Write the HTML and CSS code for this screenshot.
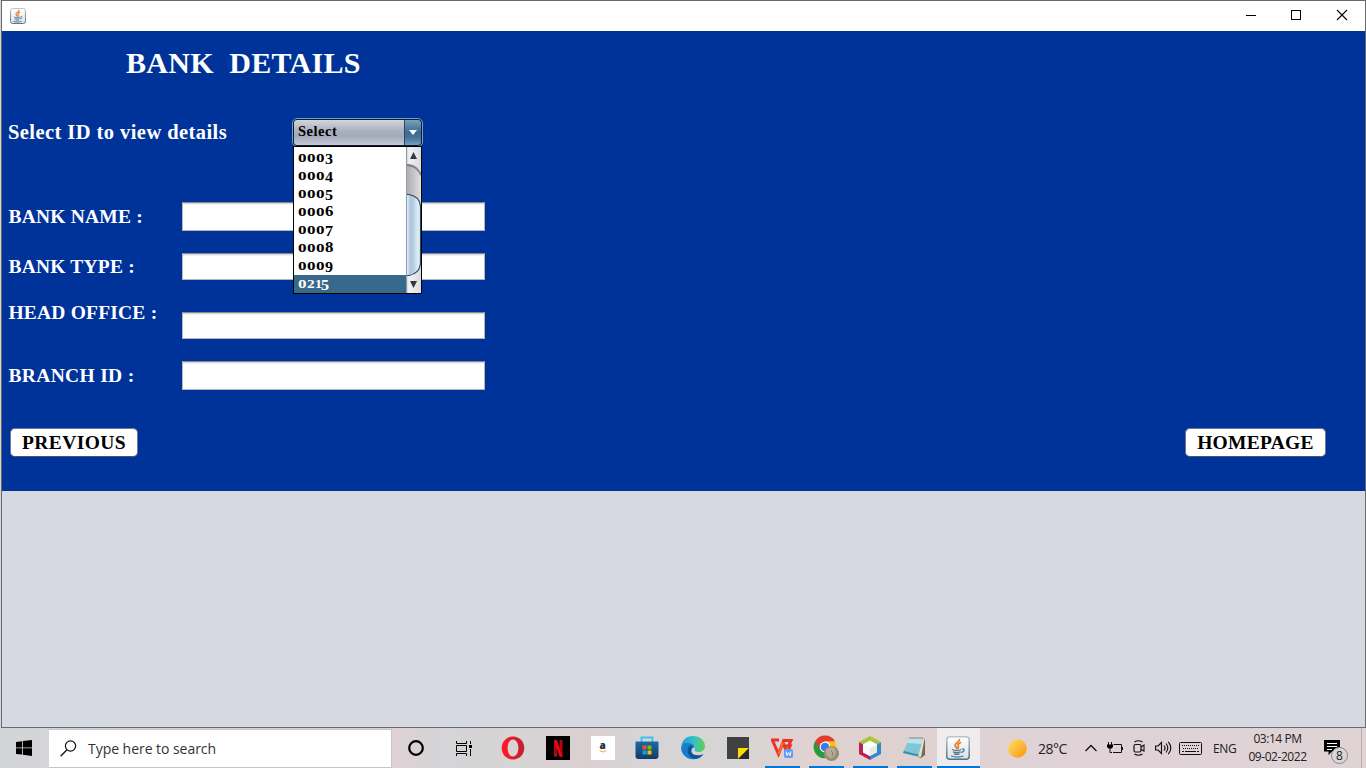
FILE: index.html
```html
<!DOCTYPE html>
<html lang="en">
<head>
<meta charset="utf-8">
<title>Bank Details</title>
<link rel="stylesheet" href="styles.css">
</head>
<body>
<svg class="defs" width="0" height="0">
  <defs>
    <linearGradient id="steel" x1="0" y1="0" x2="0" y2="1"><stop offset="0" stop-color="#b9c4cc"/><stop offset="1" stop-color="#4b7488"/></linearGradient>
    <linearGradient id="tile" x1="0" y1="0" x2="0" y2="1"><stop offset="0" stop-color="#fff"/><stop offset="1" stop-color="#dce1e5"/></linearGradient>
    <symbol id="java" viewBox="0 0 24 24">
      <rect x=".8" y=".8" width="22.4" height="22.4" rx="3" fill="url(#tile)" stroke="url(#steel)" stroke-width="1.5"/>
      <path d="M13.500 3c.6 3-5 4-4.500 6.500.2 1.200 2 2 2 3.500M15 6.300c-2 1-3.600 2.200-2.900 3.500.7 1 .7 1.800-.3 3" fill="none" stroke="#ee7420" stroke-width="1.700"/>
      <path d="M6 13.500c3 1.300 6.500 1.200 9.500 0M7 15.800c2.500 1 5 1 7.500 0M8 17.900c2 .7 3.500.7 5.500 0M16 13c3-1 3.200 2.500-1 3.500M5 20c4 1.300 9 1.300 12.500 0" fill="none" stroke="#4b7893" stroke-width="1.300"/>
    </symbol>
  </defs>
</svg>
<div class="window">
  <header class="titlebar">
    <svg class="app-icon" width="16" height="16"><use href="#java"/></svg>
    <div class="controls">
      <svg width="46" height="30" viewBox="0 0 46 30"><path d="M18 14.500h10" stroke="#000"/></svg>
      <svg width="46" height="30" viewBox="0 0 46 30"><rect x="17.500" y="9.500" width="9" height="9" fill="none" stroke="#000"/></svg>
      <svg width="46" height="30" viewBox="0 0 46 30"><path d="M17 9l10 10M27 9L17 19" stroke="#000" stroke-width="1.100"/></svg>
    </div>
  </header>
  <main class="panel">
    <h1 class="heading">BANK&nbsp; DETAILS</h1>
    <div class="select-row">
      <span class="prompt">Select ID to view details</span>
      <div class="combo">
        <span class="combo-value">Select</span>
        <span class="combo-arrow"><svg width="8" height="5"><path d="M0 0h8L4 5z" fill="#fff"/></svg></span>
        <div class="popup">
          <ul class="options">
            <li><i class="x">0</i><i class="x">0</i><i class="x">0</i><i class="d">3</i></li>
            <li><i class="x">0</i><i class="x">0</i><i class="x">0</i><i class="d">4</i></li>
            <li><i class="x">0</i><i class="x">0</i><i class="x">0</i><i class="d">5</i></li>
            <li><i class="x">0</i><i class="x">0</i><i class="x">0</i><i class="a">6</i></li>
            <li><i class="x">0</i><i class="x">0</i><i class="x">0</i><i class="d">7</i></li>
            <li><i class="x">0</i><i class="x">0</i><i class="x">0</i><i class="a">8</i></li>
            <li><i class="x">0</i><i class="x">0</i><i class="x">0</i><i class="d">9</i></li>
            <li class="selected"><i class="x">0</i><i class="x two">2</i><i class="x one">1</i><i class="d last">5</i></li>
          </ul>
          <svg class="scrollbar" width="15" height="146" viewBox="0 0 15 146">
            <defs>
              <linearGradient id="btn"><stop offset="0" stop-color="#c5c6ca"/><stop offset=".2" stop-color="#f2f3f5"/><stop offset="1" stop-color="#d8dbe1"/></linearGradient>
              <linearGradient id="track"><stop offset="0" stop-color="#aaa9ac"/><stop offset="1" stop-color="#dfdee1"/></linearGradient>
              <linearGradient id="thumb"><stop offset="0" stop-color="#edf8ff"/><stop offset=".3" stop-color="#b0c6dc"/><stop offset=".5" stop-color="#b5cbde"/><stop offset=".7" stop-color="#d0e3f0"/><stop offset="1" stop-color="#e6f8ff"/></linearGradient>
            </defs>
            <rect width="15" height="146" fill="url(#btn)"/>
            <path d="M0 17h3q10 0 12 11v30H0z" fill="url(#track)"/>
            <path d="M0 18h2q9 1 13 10" fill="none" stroke="#55555a" stroke-opacity=".6" stroke-width="2"/>
            <path d="M0 47.500h3q11 2 11.500 12v57q-1 10-11.500 12H0z" fill="url(#thumb)" stroke="#294865" stroke-width="1.200"/>
            <path d="M.5 0v146" stroke="#909bab"/>
            <path d="M4 12h7L7.500 5zM4 134h7l-3.500 7z" fill="#34373c"/>
          </svg>
        </div>
      </div>
    </div>
    <div class="form">
      <span class="label name">BANK NAME :</span><div class="field"></div>
      <span class="label">BANK TYPE :</span><div class="field"></div>
      <span class="label raised">HEAD OFFICE :</span><div class="field"></div>
      <span class="label branch">BRANCH ID :</span><div class="field"></div>
    </div>
    <div class="buttons">
      <button class="btn previous">PREVIOUS</button>
      <button class="btn home">HOMEPAGE</button>
    </div>
  </main>
</div>
<footer class="taskbar">
  <div class="start"><svg width="16" height="16" viewBox="0 0 16 16"><path d="M0 2l6-.8v6.300H0zM6.800 1.100L16 0v7.500H6.800zM0 8.300h6v6.300L0 14zM6.800 8.300H16V16l-9.200-1.200z"/></svg></div>
  <div class="search">
    <svg width="17" height="17" viewBox="0 0 17 17"><circle cx="10.500" cy="6" r="5.100" fill="none" stroke="#111" stroke-width="1.200"/><path d="M7 9.800L.6 16.200" stroke="#111" stroke-width="1.300"/></svg>
    <span>Type here to search</span>
  </div>
  <div class="apps">
    <div class="app cortana"><svg width="24" height="24" viewBox="0 0 24 24"><circle cx="12" cy="12" r="6.800" fill="none" stroke="#000" stroke-width="2.200"/></svg></div>
    <div class="app taskview"><svg width="16" height="15" viewBox="0 0 16 15"><path d="M.5 0v2.500h10V0M.5 15v-2.500h10V15M.5 4.500v6h10v-6zM14.500 0v3M14.500 8v7" fill="none" stroke="#000"/><rect x="13" y="4" width="3" height="3"/></svg></div>
    <div class="app opera"><svg width="24" height="24" viewBox="0 0 24 24"><defs><linearGradient id="op"><stop offset="0" stop-color="#ff1b2d"/><stop offset=".5" stop-color="#e51a2b"/><stop offset="1" stop-color="#c0202d"/></linearGradient></defs><path fill="url(#op)" fill-rule="evenodd" d="M12 .5C5.500.5.7 5.500.7 12S5.500 23.500 12 23.500 23.300 18.500 23.300 12 18.500.5 12 .5zM12 3.500c3.300 0 5.400 3.800 5.400 8.500S15.300 20.500 12 20.500 6.600 16.700 6.600 12 8.700 3.500 12 3.500z"/></svg></div>
    <div class="app netflix"><svg width="24" height="24" viewBox="0 0 24 24"><rect width="24" height="24"/><path d="M8 4h3v16.500L8 21zM13.500 4h3v17l-3-.5z" fill="#b1060f"/><path d="M8 4h3l5.500 17-3-.5z" fill="#e50914"/></svg></div>
    <div class="app amazon"><div class="amazon-tile"><b>a</b><svg width="8" height="3" viewBox="0 0 8 3"><path d="M.5.5Q4 3.500 7.500.5" stroke="#f3a63b" fill="none"/></svg></div></div>
    <div class="app store"><svg width="24" height="24" viewBox="0 0 24 24"><defs><linearGradient id="st" x2="0" y2="1"><stop stop-color="#176ca8"/><stop offset="1" stop-color="#143a66"/></linearGradient></defs><path d="M6.500 6V1.500h11V6" fill="none" stroke="#35c1f1" stroke-width="1.800"/><path d="M.5 5.500h23V20a3 3 0 01-3 3h-17a3 3 0 01-3-3z" fill="url(#st)"/><path d="M7.500 9.500h4v4h-4z" fill="#f25022"/><path d="M12.500 9.500h4v4h-4z" fill="#7fba00"/><path d="M7.500 14.500h4v4h-4z" fill="#00a4ef"/><path d="M12.500 14.500h4v4h-4z" fill="#ffb900"/></svg></div>
    <div class="app edge"><svg width="24" height="24" viewBox="0 0 24 24"><defs><linearGradient id="eg"><stop stop-color="#1f9bd4"/><stop offset=".55" stop-color="#35c1c5"/><stop offset="1" stop-color="#62cf4a"/></linearGradient></defs><path d="M.3 10.500C1 4 6 0 12 0c7 0 12 5 12 10 0 4-3 6-6.500 6-3 0-4.500-1-4-2.500C15 11 13.500 8 9.500 7.500 5 7 2 8.500.3 10.500z" fill="url(#eg)"/><path d="M0 12C1 8 4 6.500 8 7c4 .3 6 2.500 5.700 4.500-2-.5-3.700 1.500-3 4.500.8 3.500 4 5.500 7.300 5.700A12 12 0 010 12z" fill="#197dcb"/><path d="M10 9c-4 2-5 8 0 12.500 5 3 10 .5 12.500-3.500-4.500 2.500-11 1.500-12.500-2.500-.5-2 .5-3.500 2-4.500z" fill="#0c5297"/></svg></div>
    <div class="app sticky"><svg width="22" height="22" viewBox="0 0 22 22"><path d="M0 0h22v11L11 22H0z" fill="#414141"/><path d="M11 22V11h11z" fill="#ffdc00"/><path d="M11 22L22 11v11z" fill="#2b2b2b"/></svg></div>
    <div class="app wps open"><svg width="24" height="22" viewBox="0 0 24 22"><path d="M1 3h8M2.500 3.500L8.500 17 13 5.500 17 16l4-9M12.500 3.500H21l-2.500 5.500h-3.500" fill="none" stroke="#ed3224" stroke-width="3"/><path d="M8.500 17L13 5.500" stroke="#ff6b35" stroke-width="2"/><rect x="14" y="12" width="9" height="9" rx="2" fill="#5c9cf5"/><path d="M16 14.500l1 4 1.500-3 1.500 3 1-4" stroke="#fff" fill="none"/></svg></div>
    <div class="app chrome open"><svg width="27" height="27" viewBox="0 0 27 27"><circle cx="12" cy="12" r="11.300" fill="#fbc116"/><path d="M12 12L2.200 6.300A11.300 11.300 0 0012 23.300l4-8z" fill="#269a43"/><path d="M2.200 6.300A11.300 11.300 0 0122 6.300H12L7 14z" fill="#e23c30"/><circle cx="12" cy="12" r="5.400" fill="#fff"/><circle cx="12" cy="12" r="4.300" fill="#347cf0"/><circle cx="18.500" cy="18.500" r="7.600" fill="#9b8d75"/><path d="M13 15c2-3 7-4 9-1s0 8-3 9-7-4-6-8z" fill="#b8ab94"/><path d="M18 16l2 2-1 3" fill="none" stroke="#8a7d67"/></svg></div>
    <div class="app netbeans open"><svg width="24" height="24" viewBox="0 0 24 24"><path d="M12 0l11 6-4 2.500-7-3.700-7 3.700L1 6z" fill="#a5c73b"/><path d="M1 6l4 2.500v7.700l7 3.800v4L1 18z" fill="#bd2058"/><path d="M23 6v12l-11 6v-4l7-3.800V8.500z" fill="#3487cc"/><path d="M5 8.500l7-3.700 7 3.700v7.700L12 20l-7-3.800z" fill="#e4ece4"/><path d="M5 8.500l7 3.500 7-3.500L12 4.800z" fill="#fff"/><path d="M12 12v8l-7-3.800V8.500z" fill="#f7f8f7"/></svg></div>
    <div class="app notepad open"><svg width="24" height="24" viewBox="0 0 24 24"><path d="M20 2l3 1v16l-4 3-3-1z" fill="#756a54"/><path d="M20 2l2.500 1-3.500 18-3-.5z" fill="#e6e1ce"/><path d="M7 2.500L21 3l-5 17.500L.8 17z" fill="#7fc6d6"/><path d="M7 2.500L21 3l-1.500 5L5 7z" fill="#bce3eb"/><path d="M1 17l15 3.500.5-2L2 15z" fill="#3c91a8"/><path d="M8 1v2M10 1v2M12 1v2M14 1v2M16 1v2M18 1v2M20 1v2" stroke="#777" stroke-width=".8"/></svg></div>
    <div class="app javaapp open active"><svg width="24" height="24"><use href="#java"/></svg></div>
  </div>
  <div class="tray">
    <div class="weather"><svg width="19" height="19"><defs><linearGradient id="sun" x2="1" y2="1"><stop stop-color="#ffe06c"/><stop offset="1" stop-color="#fb9409"/></linearGradient></defs><circle cx="9.500" cy="9.500" r="9.300" fill="url(#sun)"/></svg><span>28°C</span></div>
    <svg class="chev" width="12" height="8" viewBox="0 0 12 8"><path d="M.5 7L6 1.500 11.500 7" fill="none" stroke="#111" stroke-width="1.300"/></svg>
    <svg class="battery" width="17" height="13" viewBox="0 0 17 13"><path d="M6.500 2.500h8v8h-8.500M15.500 5v3M3 6v4.500h2M1.500 0v3M4.500 0v3" fill="none" stroke="#111"/><path d="M0 2.500h6V5L4.500 6.500h-3L0 5z"/></svg>
    <svg class="meet" width="12" height="16" viewBox="0 0 12 16"><rect x="1" y="4.500" width="7" height="7.500" rx="1.500" fill="none" stroke="#111" stroke-width="1.200"/><path d="M8 7l3-2v6L8 9.500M1.500 2q4-2.500 8 0M1.500 14q4 2.500 8 0" fill="none" stroke="#111" stroke-width="1.100"/></svg>
    <svg class="sound" width="17" height="14" viewBox="0 0 17 14"><path d="M.6 5h2.500L6.500 1.500v11L3.100 9H.6zM9 4.500q2 2.500 0 5M11 2.500q3.500 4.500 0 9M13.300.8q5 6 0 12.400" fill="none" stroke="#111" stroke-width="1.150"/></svg>
    <svg class="keyboard" width="23" height="13" viewBox="0 0 23 13"><rect x=".5" y=".5" width="22" height="12" rx="1" fill="none" stroke="#111"/><path d="M3 3.500h17M4 6.500h16" stroke="#111" stroke-dasharray="1 1"/><path d="M3 9.500h2M6 9.500h11M18 9.500h2" stroke="#111"/></svg>
    <span class="lang">ENG</span>
    <div class="clock"><span>03:14 PM</span><span>09-02-2022</span></div>
    <div class="notice"><svg width="16" height="15" viewBox="0 0 16 15"><path d="M0 0h16v11.500H8L4.500 15v-3.500H0z"/><path d="M3 3.500h10M3 6.500h10M3 9.500h5" stroke="#fff"/></svg><span class="badge">8</span></div>
  </div>
  <div class="peek"></div>
</footer>
</body>
</html>
```
FILE: styles.css
```css
* { box-sizing: border-box; }
body { margin: 0; width: 1366px; height: 768px; overflow: hidden; background: #d3d4d8; font-family: "Liberation Serif", serif; display: flex; flex-direction: column; }
svg { display: block; flex: none; }
.defs { position: absolute; }
.window { margin-left: 1px; height: 728px; border: 1px solid #6b6b6d; background: #d6d9e1; flex: none; }
.titlebar { height: 30px; background: #fff; display: flex; align-items: center; justify-content: space-between; padding-left: 8px; }
.app-icon { margin-top: -1px; }
.controls { display: flex; margin-right: -1px; }
.panel { height: 460px; background: #003399; color: #fff; font-weight: bold; }
.heading { margin: 0; padding: 14px 0 0 124px; height: 87px; font-size: 30px; line-height: 35px; letter-spacing: .27px; white-space: nowrap; }
.select-row { display: flex; height: 29px; padding-left: 6px; align-items: center; }
.prompt { width: 284px; font-size: 20.5px; letter-spacing: .43px; white-space: nowrap; line-height: 24px; margin-top: -1px; }
.combo { position: relative; width: 131px; height: 29px; border: 1px solid #6a9fd0; border-radius: 5px; display: flex; color: #000; background: #111b2c; padding: 1px; }
.combo-value { flex: 1; background: linear-gradient(#d2d5dd, #a9afbd 45%, #a3aab9 65%, #c5cad8); border-radius: 3px 0 0 3px; font-size: 14.5px; letter-spacing: .5px; line-height: 23px; padding-left: 4px; }
.combo-arrow { width: 17px; border-left: 1px solid #284562; border-radius: 0 3px 3px 0; background: linear-gradient(#7a9fbc, #3e6b90 50%, #447298 70%, #70a0c2); display: grid; place-items: center; }
.popup { position: absolute; left: 0; top: 27px; width: 129px; height: 148px; border: 1px solid #000; background: #fff; display: flex; z-index: 2; }
.options { list-style: none; margin: 0; padding: 2px 0 0; flex: 1; }
.options li { height: 18px; padding-left: 4px; display: flex; line-height: 18px; font-size: 14px; }
.options .selected { background: #39698a; color: #fff; }
.options i { font-style: normal; display: block; width: 9px; transform-origin: 0 13px; }
.options .x { transform: scale(1.220, .84); }
.options .d { transform: translateY(1.5px) scale(1.150, 1); }
.options .a { transform: scale(1.200, 1.040); }
.options .two { width: 8px; transform: scale(1.1, .84); }
.options .one { width: 6px; transform: scale(1, .84); }
.form { margin-top: 55px; padding-left: 6px; display: grid; grid-template-columns: 174px 303px; grid-template-rows: 29px 27px 37px 29px; row-gap: 22px; }
.field { background: #fff; border: 1px solid #b4b5b8; border-top-color: #868789; box-shadow: inset 0 1px #d9dadd, inset 0 2px #f2f2f3; }
.raised + .field { margin-top: 10px; }
.label { font-size: 19.5px; letter-spacing: .2px; line-height: 27px; white-space: nowrap; padding-left: .5px; }
.name, .branch { padding-top: 1px; }
.branch { letter-spacing: .33px; }
.raised { margin-top: -3px; }
.buttons { margin-top: 38px; padding: 0 39px 0 8px; display: flex; justify-content: space-between; }
.btn { height: 29px; padding: 0; border: 1px solid #6e7891; border-bottom-color: #49536c; border-radius: 5px; background: #fff; font: bold 19.5px/25px "Liberation Serif", serif; }
.previous { width: 128px; letter-spacing: .4px; }
.home { width: 141px; letter-spacing: .27px; }
.taskbar { height: 40px; display: flex; align-items: center; font-family: "Open Sans", sans-serif; color: #222; background: linear-gradient(90deg, #d3d4d8 0, #d5d5d9 48px, #dfd1d4 390px, #d5d4d6 440px, #d6d4d5 520px, #dccfd1 590px, #d6d4d5 630px, #d7d4d5 735px, #e1d1d1 810px, #dfd1d1 930px, #dfd3d7 1040px, #dfd3d6 1366px); }
.start { width: 49px; display: flex; padding-left: 16px; }
.search { height: 39px; width: 343px; background: #fff; border: 1px solid #c6c6c8; border-left: 0; display: flex; align-items: center; padding-left: 11px; gap: 11px; font-size: 14px; letter-spacing: -.04px; color: #333; }
.apps { display: flex; height: 40px; width: 588px; }
.app { flex: none; display: flex; align-items: center; justify-content: center; height: 40px; }
.cortana { width: 48px; }
.taskview { width: 48px; }
.opera { width: 49px; }
.netflix { width: 41px; }
.amazon { width: 49px; }
.store { width: 40px; }
.edge { width: 51px; }
.sticky { width: 40px; margin-right: 7px; }
.amazon-tile { width: 24px; height: 24px; background: #fff; display: flex; flex-direction: column; align-items: center; color: #222c39; font: bold 10px/14px "Noto Sans", sans-serif; padding-top: 2px; }
.amazon-tile svg { margin-top: -2px; }
.open { width: 35px; margin-right: 9px; border-bottom: 2px solid #0078d7; padding: 2px 1px 0 0; }
.notepad { margin-right: 5px; }
.active { width: 43px; margin-right: 0; background: #f0eced; }
.tray { display: flex; align-items: center; height: 40px; padding-left: 28px; flex: 1; }
.weather { display: flex; align-items: center; gap: 11px; font-size: 14px; width: 77px; white-space: nowrap; letter-spacing: -.5px; }
.battery { margin-left: 10px; }
.meet { margin-left: 9px; }
.sound { margin-left: 10px; }
.keyboard { margin-left: 7px; }
.lang { font-size: 12px; margin-left: 11px; letter-spacing: -.3px; width: 24px; }
.clock { margin-left: 8px; width: 65px; display: flex; flex-direction: column; align-items: center; font-size: 12px; line-height: 18px; letter-spacing: -.45px; white-space: nowrap; margin-top: -1px; }
.notice { position: relative; margin-left: 14px; margin-top: -1px; }
.badge { position: absolute; left: 7px; top: 7px; width: 17px; height: 17px; border: 1px solid #888; border-radius: 50%; background: #d8d6d7; text-align: center; font-size: 12px; line-height: 15px; }
.peek { width: 5px; height: 40px; border-left: 1px solid #b6abae; }
```
